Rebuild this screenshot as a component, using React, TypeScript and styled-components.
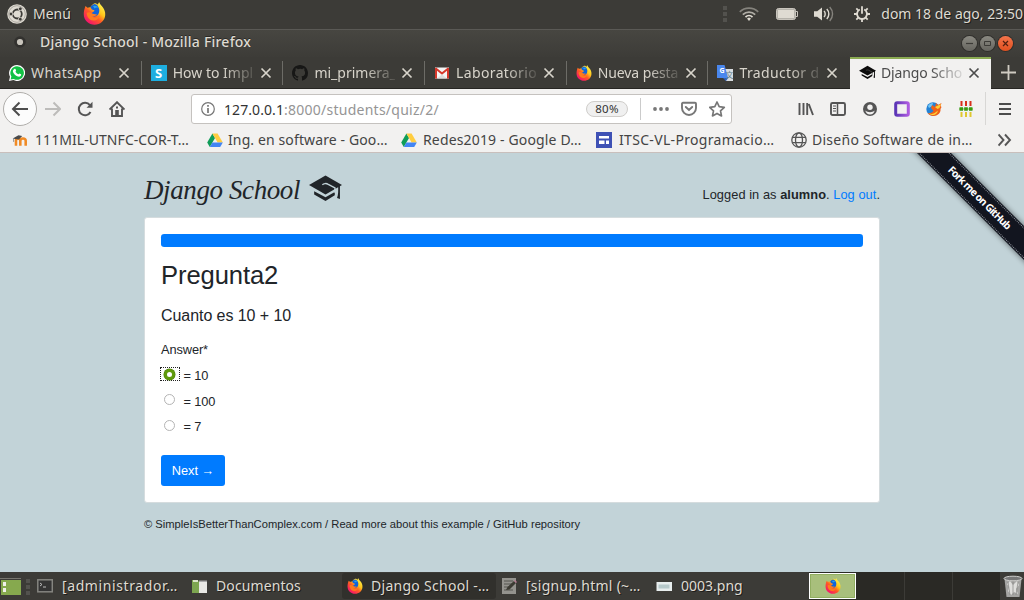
import React from 'react';
import styled, { createGlobalStyle, css } from 'styled-components';

const uiFont = '"Noto Sans", "Open Sans", sans-serif';
const pageFont = '"Liberation Sans", Arial, sans-serif';

const GlobalStyle = createGlobalStyle`
  * { box-sizing: border-box; }
  body { margin: 0; overflow: hidden; }
  #root { height: 600px; }
`;

const Desktop = styled.div`
  display: flex;
  flex-direction: column;
  width: 1024px;
  height: 600px;
  overflow: hidden;
  font-family: ${uiFont};
  font-size: 14px;
  line-height: 20px;
`;

const Label = styled.span<{ $track?: number; $fade?: boolean; $width?: number }>`
  white-space: pre;
  letter-spacing: ${(p) => p.$track ?? 0}px;
  ${(p) => p.$width && css`flex: 0 0 ${p.$width}px; width: ${p.$width}px; overflow: hidden;`}
  ${(p) => p.$fade && css`mask-image: linear-gradient(to right, #000 62%, rgba(0, 0, 0, 0.15) 100%);`}
`;

/* ---------- desktop panel ---------- */

const TopPanel = styled.header`
  display: flex;
  align-items: center;
  height: 30px;
  padding: 0 1px 2px 7px;
  color: #dfdbd2;
  background: #3c3b37;
  border-bottom: 1px solid #5a5955;
  text-shadow: 1px 1px 0 #1e1d1b;
`;

const MenuButton = styled.div`
  display: flex;
  align-items: center;
  gap: 6px;
  width: 76px;
`;

const Tray = styled.div`
  display: flex;
  align-items: center;
  margin-left: auto;
`;

const TrayItem = styled.div<{ $width: number }>`
  display: flex;
  width: ${(p) => p.$width}px;
`;

const Grip = styled.div`
  display: flex;
  flex-direction: column;
  gap: 2px;
  width: 4px;
  margin: 1px 1px 0 0;
  &::before, &::after { content: ''; }
  &::before, &::after, & > i { width: 4px; height: 4px; background: #53524e; }
`;

/* ---------- browser window ---------- */

const TitleBar = styled.div`
  display: flex;
  align-items: center;
  height: 27px;
  padding: 0 11px 3px 13px;
  color: #dfdbd2;
  font-weight: 500;
  background: linear-gradient(#474641, #3d3c38);
`;

const TitleText = styled(Label)`
  margin-left: 13px;
  text-shadow: 0 -1px 0 #2a2926;
`;

const WindowButtons = styled.div`
  display: flex;
  gap: 3px;
  margin: 2px 0 0 auto;
`;

const WindowButton = styled.div<{ $close?: boolean }>`
  display: flex;
  width: 15px;
  height: 15px;
  border-radius: 50%;
  background: ${(p) => (p.$close ? 'linear-gradient(#f4744b, #e0501f)' : 'linear-gradient(#8b8a82, #66655f)')};
  box-shadow: 0 0 0 1px #302f2c;
`;

const TabStrip = styled.div`
  display: flex;
  height: 32px;
  color: #d8d4cb;
  background: #3c3b37;
  box-shadow: inset 0 -1px 0 #272623;
`;

const Tab = styled.div<{ $active?: boolean; $bar?: boolean }>`
  display: flex;
  align-items: center;
  width: 141.7px;
  padding: 0 0 1px 9px;
  flex: none;
  ${(p) => p.$bar && css`
    background: linear-gradient(#6d6c67, #6d6c67) right 4px / 1px 24px no-repeat;
  `}
  ${(p) => p.$active && css`
    width: 141px;
    margin-left: -0.2px;
    color: #4c4c4c;
    background: #f2f1f0;
    border-top: 2px solid #8bab52;
    padding-bottom: 3px;
  `}
`;

const TabIcon = styled.div<{ $dark?: boolean }>`
  display: flex;
  width: 22px;
  flex: none;
  color: ${(p) => (p.$dark ? '#0c0c0c' : 'inherit')};
`;

const CloseMark = styled.svg`
  margin-left: 6px;
`;

const NewTab = styled.div`
  display: flex;
  margin: 8px 0 0 10px;
`;

const Toolbar = styled.div`
  display: flex;
  align-items: center;
  height: 39px;
  padding: 0 12px 0 3px;
  color: #4c4c4c;
  background: #f2f1f0;
`;

const BackButton = styled.div`
  display: flex;
  align-items: center;
  justify-content: center;
  width: 34px;
  height: 34px;
  margin-top: 1px;
  border: 1px solid #b0aeab;
  border-radius: 50%;
  background: #fcfcfc;
`;

const NavIcons = styled.div`
  display: flex;
  gap: 16px;
  margin: 1px 66px 0 8px;
`;

const UrlBar = styled.div`
  display: flex;
  align-items: center;
  width: 541px;
  height: 30px;
  padding-left: 9px;
  background: #fff;
  border: 1px solid #c5c2bf;
  border-radius: 3px;
  color: #333;
`;

const Address = styled.div`
  display: flex;
  width: 362px;
  margin-left: 9px;
  padding-top: 2px;
`;

const Path = styled(Label)`
  color: #959595;
`;

const ZoomBadge = styled.div`
  width: 42px;
  height: 16px;
  border-radius: 8px;
  border: 1px solid #cfcdca;
  background: #f0f0f0;
  font-size: 11.5px;
  line-height: 14px;
  letter-spacing: 0.3px;
  text-align: center;
`;

const UrlDivider = styled.div`
  width: 1px;
  height: 22px;
  margin: 0 12px;
  background: #cbcbcb;
`;

const UrlActions = styled.div`
  display: flex;
  align-items: center;
  gap: 12px;
`;

const Extensions = styled.div`
  display: flex;
  align-items: center;
  gap: 16px;
  margin-left: auto;
`;

const MenuDivider = styled.div`
  width: 1px;
  height: 33px;
  margin: 0 12px 0 11px;
  background: #d8d7d5;
`;

const Bookmarks = styled.div`
  display: flex;
  align-items: center;
  height: 25px;
  padding: 0 12px;
  color: #444;
  background: #f2f1f0;
  border-bottom: 1px solid #c9bfbc;
`;

const Bookmark = styled.div<{ $width: number; $icon: number }>`
  display: flex;
  align-items: center;
  flex: none;
  width: ${(p) => p.$width}px;
  & > svg { flex: none; margin-right: ${(p) => p.$icon - 16}px; }
`;

const Overflow = styled.div`
  display: flex;
  margin-left: auto;
`;

/* ---------- web page ---------- */

const Page = styled.main`
  position: relative;
  height: 419px;
  padding: 21px 144px 0;
  overflow: hidden;
  color: #212529;
  background: #c2d3d8;
  font-family: ${pageFont};
  font-size: 12.8px;
  line-height: 19.2px;
`;

const Masthead = styled.div`
  display: flex;
  justify-content: space-between;
  height: 43px;
`;

const Brand = styled.div`
  display: flex;
  align-items: flex-start;
  padding-top: 1px;
`;

const BrandName = styled.h1`
  margin: 0;
  width: 165px;
  font-family: "Liberation Serif", serif;
  font-style: italic;
  font-weight: 400;
  font-size: 27px;
  line-height: 31px;
  letter-spacing: -0.4px;
  white-space: nowrap;
`;

const Session = styled.div`
  padding-top: 11px;
  letter-spacing: 0.06px;
`;

const Link = styled.a`
  color: #007bff;
`;

const Card = styled.section`
  height: 286px;
  padding: 16px;
  background: #fff;
  border: 1px solid #d5dcde;
  border-radius: 3px;
`;

const Progress = styled.div`
  height: 13px;
  border-radius: 3.2px;
  background: #007bff;
`;

const Question = styled.h2`
  margin: 13px 0 0;
  font-size: 25.6px;
  font-weight: 400;
  line-height: 31px;
  letter-spacing: -0.1px;
`;

const Lead = styled.p`
  margin: 13px 0 0;
  font-size: 16px;
  line-height: 24px;
  letter-spacing: -0.06px;
`;

const FieldLabel = styled.div`
  margin-top: 12px;
  letter-spacing: -0.1px;
`;

const Choice = styled.label`
  display: flex;
  align-items: center;
  height: 25.4px;
  letter-spacing: -0.1px;
`;

const Choices = styled.div`
  margin: 4px 0 0 -1px;
`;

const RadioFrame = styled.span<{ $focused?: boolean }>`
  display: flex;
  align-items: center;
  width: 20px;
  height: 14px;
  margin-top: -3px;
  padding-left: 3px;
  border: 1px ${(p) => (p.$focused ? 'dotted #222' : 'solid transparent')};
`;

const Radio = styled.span<{ $checked?: boolean }>`
  width: 11px;
  height: 11px;
  border-radius: 50%;
  ${(p) => p.$checked
    ? css`border: 3.5px solid #5f9a0c; background: #fff; box-shadow: 0 0 0 0.5px #4c7c0a;`
    : css`border: 1px solid #b4b4b4; background: #fff;`}
`;

const NextButton = styled.button`
  display: block;
  width: 64px;
  height: 31px;
  margin-top: 16px;
  padding: 0;
  border: 0;
  border-radius: 3px;
  color: #fff;
  background: #007bff;
  font: 12.8px/31px ${pageFont};
`;

const Footer = styled.footer`
  margin-top: 12px;
  font-size: 11.2px;
  line-height: 18px;
  white-space: nowrap;
`;

const Ribbon = styled.div`
  position: absolute;
  top: 33px;
  left: 879px;
  width: 200px;
  height: 24px;
  padding: 1px 0;
  background: #12151f;
  box-shadow: 0 0 5px 1px rgba(0, 0, 0, 0.4);
  transform: rotate(45deg);
`;

const RibbonText = styled.div`
  height: 22px;
  border: 1px dotted #8e939b;
  border-width: 1px 0;
  color: #fff;
  font: 700 10.4px/19px ${uiFont};
  letter-spacing: -0.8px;
  text-align: center;
`;

/* ---------- task bar ---------- */

const TaskBar = styled.footer`
  display: flex;
  align-items: center;
  height: 28px;
  color: #dfdbd2;
  background: #3c3b37;
  text-shadow: 1px 1px 0 #1e1d1b;
`;

const DesktopButton = styled.div`
  display: flex;
  width: 26px;
`;

const Task = styled.div<{ $width: number; $icon: number; $active?: boolean }>`
  display: flex;
  align-items: center;
  flex: none;
  width: ${(p) => p.$width}px;
  height: 26px;
  padding-left: 5px;
  border-radius: 3px;
  background: ${(p) => (p.$active ? '#31302c' : 'transparent')};
  & > svg { flex: none; margin-right: ${(p) => p.$icon - 16}px; }
`;

const Workspaces = styled.div`
  display: flex;
  height: 28px;
  margin-left: auto;
  background: #2a2925;
`;

const Workspace = styled.div<{ $current?: boolean }>`
  display: flex;
  align-items: center;
  justify-content: center;
  width: 48px;
  height: 28px;
  border-right: 1px solid #3c3b37;
  ${(p) => p.$current && css`
    width: 47px;
    height: 26px;
    margin: 1px 1px 0 0;
    border: 1px solid #fff;
    background: #a8bf7c;
    box-shadow: inset 0 0 0 1px #91ae61;
  `}
`;

const Trash = styled.div`
  display: flex;
  align-items: center;
  width: 23px;
  padding-left: 2px;
`;

/* ---------- drawings ---------- */

const Firefox = ({ size = 16, id }: { size?: number; id: string }) => (
  <svg width={size} height={size} viewBox="0 0 24 24">
    <defs>
      <linearGradient id={id} x1="0.85" y1="0.1" x2="0.2" y2="0.9">
        <stop offset="0" stopColor="#fff14d" />
        <stop offset="0.35" stopColor="#ffc41a" />
        <stop offset="0.6" stopColor="#ff5a24" />
        <stop offset="1" stopColor="#f5156c" />
      </linearGradient>
    </defs>
    <path fill={`url(#${id})`} d="M2.600 4.200 4.700 6c1-.6 2-.7 3-.6C8.800 3.800 10 2 12.300 1.300c1.500-.4 2 .7 3.400 1.300C16 1.300 16.500.6 17 .3c.6 2.200 2.500 3.500 4 5.800 1.300 2 2.400 4.600 2.200 7.400-.4 6-5.200 10.200-11.200 10.200S.8 19 .8 12.700c0-3 .7-6 1.800-8.500Z" />
    <path fill="#1263d8" d="M7.700 5.400C8.800 3.800 10.200 2.500 12 2.100c2.600.2 4.600 2.800 5 6.300.3 3.800-1.900 6.600-5 6.600-2.900 0-5-1-5.500-3l3-.4c.3-1.300 2.500-1.700 2.500-2.700-.2-.8-2-.6-2.900-1.400-.6-.6-.8-1.300-1.400-2.100Z" />
    <path fill="#25a8ee" d="M10.500 4.400c2-1 4.500-.2 5.700 1.700-1.500-.7-3-.3-4.100.8Z" />
    <path fill="#ff7b1c" d="M3.900 11.300c2.200-1.300 4.400-.5 6.400.9 1.700.8 2.700.2 4.200.7-.8 1.900-3.100 2.500-5 2.100 2.200 2 6.600 1.200 8.100-1.500-.3 3.500-3.300 5.900-6.900 5.900-3.800 0-6.700-3.300-6.800-8.100Z" />
  </svg>
);

const UbuntuMark = () => (
  <svg width="20" height="20" viewBox="0 0 20 20">
    <circle cx="10" cy="10" r="9.800" fill="#dfdbd2" />
    <circle cx="10.300" cy="10" r="4.500" fill="none" stroke="#3c3b37" strokeWidth="1.800" />
    <path d="M10.300 10h-6M10.300 10l3 5.200M10.300 10l3-5.200" stroke="#dfdbd2" strokeWidth="1" />
    <g fill="#3c3b37" stroke="#dfdbd2" strokeWidth="0.800">
      <circle cx="4" cy="10" r="1.900" />
      <circle cx="13.300" cy="4.800" r="1.900" />
      <circle cx="13.300" cy="15.200" r="1.900" />
    </g>
    <circle cx="10" cy="10" r="8.300" fill="none" stroke="#8b8881" strokeWidth="0.600" />
  </svg>
);

const Cap = ({ width, height, bg, line = 1.2 }: { width: number; height: number; bg: string; line?: number }) => (
  <svg width={width} height={height} viewBox="0 0 32 26" fill="currentColor">
    <path d="M16 .5 32 9.500 16 18.700 0 9.500Z" />
    <path d="M5 15.700v3l11 6.300 9-5.500v-3.200l-9 5.300Z" />
    <path d="M13 9.500c1.200-1.500 4-1.500 5.200-.8l7 3.800v4.500" fill="none" stroke={bg} strokeWidth={line} />
    <path d="M28.200 10.500 30 9.800v13.500l-2.800-1c1.200-3 1.300-8 1-11.800Z" />
  </svg>
);

const DriveMark = () => (
  <svg width="16" height="16" viewBox="0 0 16 16">
    <path fill="#0f9d58" d="M5.400 1.500 8 6 2.800 15 .2 10.500Z" />
    <path fill="#ffcd40" d="M5.400 1.500h5.200l5.200 9h-5.200Z" />
    <path fill="#4285f4" d="M5.400 10.500h10.400L13.200 15H2.800Z" />
  </svg>
);

const Close = () => (
  <CloseMark width="12" height="12" viewBox="0 0 12 12">
    <path d="m1.500 1.500 9 9m0-9-9 9" stroke="currentColor" strokeWidth="1.700" fill="none" />
  </CloseMark>
);

const WhatsAppMark = () => (
  <svg width="16" height="16" viewBox="0 0 16 16">
    <path fill="#fff" d="M8 0a8 8 0 1 1-3.600 15.100L0 16l1-4.200A8 8 0 0 1 8 0Z" />
    <path fill="#12c244" d="M8 1.200a6.800 6.800 0 1 1-3.300 12.700l-3.100.7.800-3A6.800 6.800 0 0 1 8 1.200Z" />
    <path fill="#fff" d="M5.300 3.900c.4-.3 1-.2 1.200.2l.6 1.500c.1.500-.6.900-.6 1.200.6 1.200 1.600 2 2.700 2.500.4 0 .8-.9 1.200-.9l1.600.8c.4.300.1 1.200-.2 1.600-.7.900-1.800 1.100-2.900.8-2.400-.7-4.700-3-5-5.100 0-1 .5-2 1.400-2.600Z" />
  </svg>
);

const ScribdTile = styled.div`
  width: 16px;
  height: 16px;
  color: #fff;
  background: #1eaee0;
  font: 700 13px/16px ${uiFont};
  text-align: center;
`;

const GitHubMark = () => (
  <svg width="16" height="16" viewBox="0 0 16 16" fill="#171716">
    <path d="M8 0C3.580 0 0 3.580 0 8c0 3.540 2.290 6.530 5.470 7.590.4.070.55-.17.55-.38v-1.490c-2.010.37-2.530-.49-2.690-.94-.09-.23-.48-.94-.82-1.130-.28-.15-.68-.52-.01-.53.63-.01 1.080.58 1.230.82.72 1.210 1.870.87 2.330.66.07-.52.28-.87.51-1.070-1.780-.2-3.640-.89-3.640-3.950 0-.87.31-1.590.82-2.150-.08-.2-.36-1.020.08-2.120 0 0 .67-.21 2.200.82A7.500 7.500 0 0 1 8 3.860c.68 0 1.360.09 2 .27 1.530-1.040 2.200-.82 2.200-.82.44 1.100.16 1.920.08 2.120.51.56.82 1.270.82 2.150 0 3.070-1.870 3.750-3.650 3.950.29.25.54.73.54 1.480v2.200c0 .21.15.46.55.38A8 8 0 0 0 16 8c0-4.420-3.580-8-8-8Z" />
  </svg>
);

const GmailMark = () => (
  <svg width="16" height="16" viewBox="0 0 16 16">
    <rect x="1" y="2.500" width="14" height="11" fill="#f4f4f4" />
    <path d="M2 3v10.500M14 3v10.500" stroke="#d5382c" strokeWidth="2" />
    <path d="m1.500 3.300 6.500 5.200 6.500-5.200" fill="none" stroke="#d5382c" strokeWidth="2" />
    <path d="m3 13.500 5-4 5 4Z" fill="#dcdcdc" />
  </svg>
);

const GlyphOnBlue = styled.span`
  position: absolute;
  top: 0;
  left: 2px;
  color: #fff;
  font: 700 7px/12px ${uiFont};
`;

const GlyphOnGrey = styled.span`
  position: absolute;
  top: 5px;
  left: 8px;
  color: #607d8b;
  font: 8px/10px "Noto Sans CJK SC", sans-serif;
`;

const TranslateBox = styled.div`
  position: relative;
  width: 17px;
  height: 16px;
  & > svg { display: block; }
`;

const TranslateMark = () => (
  <TranslateBox>
    <svg width="17" height="16" viewBox="0 0 17 16">
      <path d="M6 4h10v12H9Z" fill="#d9dde0" />
      <path d="M0 0h7.500l3.700 13H0Z" fill="#4a87ee" />
      <path d="m6 13 5.200 0L9 16Z" fill="#2c5fc4" />
    </svg>
    <GlyphOnBlue>G</GlyphOnBlue>
    <GlyphOnGrey>文</GlyphOnGrey>
  </TranslateBox>
);

const MoodleMark = () => (
  <svg width="17" height="16" viewBox="0 0 18 16">
    <path d="M4.200 14V8.800c0-3.300 4.600-3.300 4.600 0V14m0-5.200c0-3.300 5.700-3.300 5.700 0V14" fill="none" stroke="#f08a24" strokeWidth="2.700" />
    <path d="m.8 6.500 6-3.500 4 .7-3.500 3.800-4-.5Z" fill="#4a4a4a" />
    <path d="M1.700 6.500V10" stroke="#777" strokeWidth="0.800" />
  </svg>
);

const SitesMark = () => (
  <svg width="16" height="16" viewBox="0 0 16 16">
    <path fill="#3f51b5" d="M0 0h16v16H0Z" />
    <path fill="#fff" d="M3 4h10v2.500H3ZM3 8.500h5.500v3.500H3ZM10 8.500h3v3.500h-3Z" />
  </svg>
);

const Globe = () => (
  <svg width="16" height="16" viewBox="0 0 16 16" fill="none" stroke="#565656" strokeWidth="1.300">
    <circle cx="8" cy="8" r="7.200" />
    <ellipse cx="8" cy="8" rx="3.500" ry="7.200" />
    <path d="M1.500 5.300h13M1.500 10.700h13" />
  </svg>
);

const tabs = [
  { icon: <WhatsAppMark />, text: 'WhatsApp', track: 0.37 },
  { icon: <ScribdTile>S</ScribdTile>, text: 'How to Impl', track: 0, fade: true },
  { icon: <GitHubMark />, text: 'mi_primera_', track: 0, fade: true },
  { icon: <GmailMark />, text: 'Laboratorio', track: 0.36, fade: true },
  { icon: <Firefox id="fx-tab" />, text: 'Nueva pesta', track: -0.1, fade: true },
  { icon: <TranslateMark />, text: 'Traductor de', track: 0.36, fade: true },
];

const answers = ['= 10', '= 100', '= 7'];

export default function App() {
  return (
    <Desktop>
      <GlobalStyle />
      <TopPanel>
        <MenuButton>
          <UbuntuMark />
          <Label>Menú</Label>
        </MenuButton>
        <Firefox id="fx-panel" size={23} />
        <Tray>
          <TrayItem $width={16}><Grip><i /></Grip></TrayItem>
          <TrayItem $width={37}>
            <svg width="20" height="14" viewBox="0 0 20 14" fill="none" strokeWidth="1.700">
              <path d="M.8 4.800c5-4.800 13.400-4.800 18.400 0" stroke="#85837d" />
              <path d="M3.800 7.600c3.500-3.400 8.900-3.400 12.400 0" stroke="#b1aea7" />
              <path d="M6.500 10.200c2-2 5-2 7 0" stroke="#dfdbd2" />
              <path d="m8 11.500 2-1 2 1-2 2.400Z" fill="#dfdbd2" />
            </svg>
          </TrayItem>
          <TrayItem $width={38}>
            <svg width="22" height="12" viewBox="0 0 22 12">
              <rect x="0.500" y="0.500" width="19" height="11" rx="2" fill="#b5b2aa" stroke="#c9c5bd" />
              <path d="M2 2h16v8H2Z" fill="#dfdbd2" />
              <path d="M20 3.500h1.500v5H20" fill="none" stroke="#c9c5bd" />
            </svg>
          </TrayItem>
          <TrayItem $width={40}>
            <svg width="20" height="16" viewBox="0 0 20 16">
              <path d="M0 5.300h3.200L8 1.500v13L3.200 10.700H0Z" fill="#dfdbd2" />
              <g fill="none" strokeWidth="1.400">
                <path d="M10 5c1.600 1.500 1.600 4.500 0 6" stroke="#dfdbd2" />
                <path d="M12.800 3c2.700 2.800 2.700 7.200 0 10" stroke="#dfdbd2" />
                <path d="M15.700 1c3.800 4 3.800 10 0 14" stroke="#85837d" />
              </g>
            </svg>
          </TrayItem>
          <TrayItem $width={27}>
            <svg width="16" height="16" viewBox="0 0 16 16" fill="none" stroke="#dfdbd2">
              <path d="M5.800 3.500a5 5 0 1 0 4.400 0" strokeWidth="1.900" />
              <path d="M8 .3v7.500M2.300 2.300l2 2M13.700 2.300l-2 2M0 8h3M13 8h3M2.300 13.700l2-2M13.700 13.700l-2-2M8 13v3" strokeWidth="1.800" />
            </svg>
          </TrayItem>
          <Label>dom 18 de ago, 23:50</Label>
        </Tray>
      </TopPanel>

      <TitleBar>
        <svg width="14" height="14" viewBox="0 0 14 14">
          <circle cx="7" cy="7" r="5.800" fill="#32312e" />
          <circle cx="7" cy="7" r="3.100" fill="#c9c5bc" />
        </svg>
        <TitleText $track={0.22}>Django School - Mozilla Firefox</TitleText>
        <WindowButtons>
          <WindowButton>
            <svg width="15" height="15"><path d="M4 7.500h7" stroke="#3c3b37" strokeWidth="1.200" /></svg>
          </WindowButton>
          <WindowButton>
            <svg width="15" height="15"><path d="M4.500 5.500h6v4h-6Z" stroke="#3c3b37" fill="none" /></svg>
          </WindowButton>
          <WindowButton $close>
            <svg width="15" height="15"><path d="m5 5 5 5m0-5-5 5" stroke="#512010" strokeWidth="1.200" /></svg>
          </WindowButton>
        </WindowButtons>
      </TitleBar>

      <TabStrip>
        {tabs.map((tab, i) => (
          <Tab key={tab.text} $bar={i < 5}>
            <TabIcon>{tab.icon}</TabIcon>
            <Label $width={81} $track={tab.track} $fade={tab.fade}>{tab.text}</Label>
            <Close />
          </Tab>
        ))}
        <Tab $active>
          <TabIcon $dark><Cap width={17} height={15} bg="#555" /></TabIcon>
          <Label $width={81} $track={-0.14} $fade>Django Scho</Label>
          <Close />
        </Tab>
        <NewTab>
          <svg width="15" height="15"><path d="M7.500 0v15M0 7.500h15" stroke="#cfcbc2" strokeWidth="1.800" /></svg>
        </NewTab>
      </TabStrip>

      <Toolbar>
        <BackButton>
          <svg width="18" height="16" fill="none" stroke="#4e4e4e" strokeWidth="2"><path d="M17 8H2M8.500 1.500 2 8l6.500 6.500" /></svg>
        </BackButton>
        <NavIcons>
          <svg width="16" height="16" fill="none" stroke="#bdbcba" strokeWidth="2"><path d="M0 8h15M8.500 1.500 15 8l-6.500 6.500" /></svg>
          <svg width="16" height="16" fill="none" stroke="#555" strokeWidth="2"><path d="M13.500 11a6.200 6.200 0 1 1-.6-6.800" /><path d="M15.500.8v6h-6Z" fill="#555" stroke="none" /></svg>
          <svg width="16" height="16" fill="none" stroke="#555" strokeWidth="1.900"><path d="M.5 8.500 8 1.200l7.500 7.300M3 7.500V15h10V7.500" /><path d="M6.200 9h3.600v6H6.200Z" fill="#555" stroke="none" /><path d="M8 5.500v2" strokeWidth="2" /></svg>
        </NavIcons>
        <UrlBar>
          <svg width="14" height="14" viewBox="0 0 14 14" fill="none" stroke="#767676">
            <circle cx="7" cy="7" r="6.300" strokeWidth="1.200" />
            <path d="M7 3v1.800M7 6v5" strokeWidth="1.700" />
          </svg>
          <Address>
            <Label $track={0.08}>127.0.0.1</Label>
            <Path $track={0.25}>:8000/students/quiz/2/</Path>
          </Address>
          <ZoomBadge>80%</ZoomBadge>
          <UrlDivider />
          <UrlActions>
            <svg width="16" height="16" fill="#777"><circle cx="2" cy="8" r="1.900" /><circle cx="8" cy="8" r="1.900" /><circle cx="14" cy="8" r="1.900" /></svg>
            <svg width="16" height="16" fill="none" stroke="#777" strokeWidth="1.900" strokeLinecap="round"><path d="M2 1.800h12q1 0 1 1V7a7 7 0 0 1-14 0V2.800q0-1 1-1Z" /><path d="M4.800 6 8 9l3.200-3" /></svg>
            <svg width="17" height="16" fill="none" stroke="#777" strokeWidth="1.700" strokeLinejoin="round"><path d="m8 1 2.200 4.700 5.100.6-3.800 3.500 1 5.100-4.500-2.500-4.500 2.500 1-5.100L.7 6.300l5.100-.6Z" /></svg>
          </UrlActions>
        </UrlBar>
        <Extensions>
          <svg width="16" height="16" stroke="#555" strokeWidth="1.900" fill="none"><path d="M1.500 2v12M5.500 2v12M9.200 2v12M10.800 3l4.200 11" /></svg>
          <svg width="16" height="16" stroke="#555" fill="none"><rect x="1" y="2" width="14" height="12" rx="1.500" strokeWidth="1.900" /><path d="M7.500 2v12" strokeWidth="1.500" /><path d="M3 5h3M3 7.500h3M3 10h3" /></svg>
          <svg width="16" height="16" viewBox="0 0 16 16"><circle cx="8" cy="8" r="7" fill="#555" /><circle cx="8" cy="6.300" r="2.700" fill="#f2f1f0" /><path d="M3.300 9.500c1.200 1.200 2.900 1.700 4.700 1.700s3.500-.5 4.700-1.700c-.6 2.500-2.300 4-4.700 4s-4.100-1.500-4.700-4Z" fill="#f2f1f0" /></svg>
          <svg width="16" height="16">
            <defs><linearGradient id="box"><stop stopColor="#5b35b5" /><stop offset="1" stopColor="#ad5be0" /></linearGradient></defs>
            <rect x="1.700" y="1.700" width="12.600" height="12.600" rx="1.500" fill="#f2f1f0" stroke="url(#box)" strokeWidth="3" />
          </svg>
          <svg width="16" height="16">
            <circle cx="7" cy="8" r="6.700" fill="#2382d5" />
            <path d="M2 5c1-2 3-3 5-3l-1 3-3 2Z" fill="#75c8f3" />
            <path d="m6 4 3 2 1-4 2 2 3.500-2-1 3 1 1-1 2c.5 4-3 7-7 7-3 0-5-1.500-6-3 2 .5 4 0 6-2L5 7Z" fill="#f06018" />
            <path d="m9 6 6-3-1.500 4-2 1Zm-6 6.500c3 1 5 .5 9-3-1 4.500-5 6-9 3Z" fill="#ffd035" />
          </svg>
          <svg width="16" height="16" strokeWidth="2">
            <path d="M3.500 0v5M8 0v5M12.500 0v5" stroke="#d8301c" />
            <path d="M3.500 11v5M8 11v5M12.500 11v5" stroke="#dfc72f" />
            <path d="M1 8h14" stroke="#6fb75a" strokeWidth="1" />
            <path d="M1.500 8h3.500M6.200 8h3.600M11 8h3.500" stroke="#399a10" strokeWidth="3.500" />
          </svg>
        </Extensions>
        <MenuDivider />
        <svg width="14" height="14" stroke="#4c4c4c" strokeWidth="2"><path d="M1 2h12M1 7h12M1 12h12" /></svg>
      </Toolbar>

      <Bookmarks>
        <Bookmark $width={195} $icon={22}><MoodleMark /><Label $track={0.06}>111MIL-UTNFC-COR-T…</Label></Bookmark>
        <Bookmark $width={194} $icon={21}><DriveMark /><Label $track={0.12}>Ing. en software - Goo…</Label></Bookmark>
        <Bookmark $width={195} $icon={22}><DriveMark /><Label $track={0.15}>Redes2019 - Google D…</Label></Bookmark>
        <Bookmark $width={195} $icon={23}><SitesMark /><Label $track={0.32}>ITSC-VL-Programacio…</Label></Bookmark>
        <Bookmark $width={185} $icon={21}><Globe /><Label $track={0.27}>Diseño Software de in…</Label></Bookmark>
        <Overflow>
          <svg width="14" height="14" fill="none" stroke="#555" strokeWidth="1.900"><path d="m.5 1.500 5 5.500-5 5.500M7 1.500l5 5.500-5 5.500" /></svg>
        </Overflow>
      </Bookmarks>

      <Page>
        <Masthead>
          <Brand>
            <BrandName>Django School</BrandName>
            <Cap width={33} height={27} bg="#c2d3d8" line={1.4} />
          </Brand>
          <Session>
            Logged in as <strong>alumno</strong>. <Link>Log out</Link>.
          </Session>
        </Masthead>
        <Card>
          <Progress />
          <Question>Pregunta2</Question>
          <Lead>Cuanto es 10 + 10</Lead>
          <FieldLabel>Answer*</FieldLabel>
          <Choices>
            {answers.map((answer, i) => (
              <Choice key={answer}>
                <RadioFrame $focused={i === 0}><Radio $checked={i === 0} /></RadioFrame>
                <span>&nbsp;{answer}</span>
              </Choice>
            ))}
          </Choices>
          <NextButton>Next →</NextButton>
        </Card>
        <Footer>© SimpleIsBetterThanComplex.com / Read more about this example / GitHub repository</Footer>
        <Ribbon><RibbonText>Fork me on GitHub</RibbonText></Ribbon>
      </Page>

      <TaskBar>
        <DesktopButton>
          <svg width="22" height="20">
            <path d="M0 2.500h21" stroke="#77756e" />
            <path d="M1 4h20v15H1Z" fill="#86a94e" />
            <path d="M3 6h3v4H3ZM3 12h3v4H3Z" fill="#f0f0ea" />
          </svg>
        </DesktopButton>
        <Grip><i /></Grip>
        <Task $width={155} $icon={25}>
          <svg width="17" height="14"><rect x="1.800" y="0.800" width="14.500" height="12" fill="#343434" stroke="#858580" strokeWidth="1.500" /><path d="m4 4 2 1.500L4 7M7 8h3" stroke="#bbb" fill="none" /></svg>
          <Label $track={0.6}>[administrador…</Label>
        </Task>
        <Task $width={156} $icon={24}>
          <svg width="17" height="15"><path d="M1 1h6l1 2v11H1Z" fill="#7da650" /><path d="M2 1h5v2H2Z" fill="#dbe5c9" /><path d="M8 3h8v11H8Z" fill="#e8e8e4" /><path d="M8 1.500h8V3H8Z" fill="#aaa" /></svg>
          <Label $track={0.1}>Documentos</Label>
        </Task>
        <Task $width={154} $icon={24} $active>
          <Firefox id="fx-task" />
          <Label $track={0.28}>Django School -…</Label>
        </Task>
        <Task $width={155} $icon={25}>
          <svg width="16" height="16"><path d="M1 0h14v16H1Z" fill="#94938e" /><path d="M3 3h9M3 6h8M3 9h6M3 12h9" stroke="#55544f" /><path d="m5 12 1.500-3L13 3l2 2-6.500 6.500Z" fill="#3c3b33" /><path d="m13 3 1-1 2 2-1 1Z" fill="#b77b91" /></svg>
          <Label $track={0.26}>[signup.html (~…</Label>
        </Task>
        <Task $width={120} $icon={25}>
          <svg width="16" height="9"><path d="M.5 0h15.500v9H.5Z" fill="#e8eeee" /><path d="M2.500 2.500h11v4h-11Z" fill="#b6c9ca" /></svg>
          <Label>0003.png</Label>
        </Task>
        <Workspaces>
          <Workspace $current><Firefox id="fx-space" /></Workspace>
          <Workspace />
          <Workspace />
          <Workspace />
        </Workspaces>
        <Trash>
          <svg width="20" height="23">
            <path d="m1.500 4 2 18h13l2-18Z" fill="#a5a5a3" />
            <path d="m4 9 3-3 3 4 4-4 2 4-3 4 2 5-4-2-3 3-3-4 1-4Z" fill="#dededc" />
            <path d="m5 7 2 13M10 6v14M15 7l-2 13" stroke="#858583" strokeWidth="0.700" />
            <ellipse cx="10" cy="3.500" rx="9" ry="2.300" fill="#777" stroke="#cfcfcd" />
          </svg>
        </Trash>
      </TaskBar>
    </Desktop>
  );
}
